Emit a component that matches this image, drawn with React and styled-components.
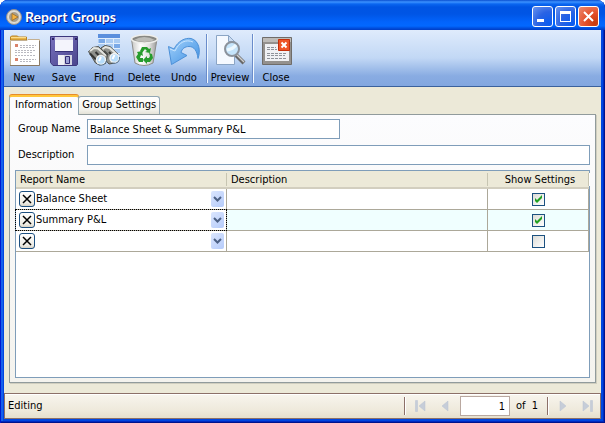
import { useState } from "react";
import styled, { createGlobalStyle, css } from "styled-components";

const GlobalStyle = createGlobalStyle`
  * {
    box-sizing: border-box;
  }
  body {
    margin: 0;
    background: #fff;
  }
  body, button, input, select {
    font-family: "DejaVu Sans Condensed", "DejaVu Sans", sans-serif;
    font-size: 11px;
    line-height: 14px;
    color: #000;
  }
`;

const Window = styled.div`
  display: flex;
  flex-direction: column;
  min-height: 100vh;
  padding: 0 4px 4px;
  border-radius: 8px 8px 0 0;
  background: #0046e0;
  box-shadow: inset 1px 0 #0019cf, inset -1px -1px #00138c, inset -2px -2px #0029c0, inset 3px 0 #1660ec;
`;

const TitleBar = styled.header`
  display: flex;
  align-items: center;
  gap: 3px;
  height: 30px;
  margin: 0 -4px;
  padding: 3px 6px 0;
  border-radius: 8px 8px 0 0;
  background: linear-gradient(
    #0a4fd0 0,
    #3c92ff 2px,
    #0a66f0 4px,
    #0054e3 7px,
    #0055e5 14px,
    #0264fc 22px,
    #0268ff 26px,
    #0050e0 28px,
    #003cc4 30px
  );
`;

const Title = styled.h1`
  flex: 1;
  margin: 0;
  font: bold 14px/18px Lato, "Open Sans", sans-serif;
  color: #fff;
  text-shadow: 1px 1px #0a1883;
`;

const CaptionButtons = styled.div`
  display: flex;
  gap: 2px;
`;

const CaptionButton = styled.button`
  display: grid;
  place-items: center;
  width: 21px;
  height: 21px;
  padding: 0;
  border: 1px solid #fff;
  border-radius: 3px;
  background: ${({ $close }) =>
    $close
      ? "radial-gradient(circle at 85% 85%, #c83a0c, #e4512c 45%, #eb8a70)"
      : "radial-gradient(circle at 85% 85%, #0a5cf0, #2a63e4 50%, #6a94ee)"};
`;

const Toolbar = styled.div`
  display: flex;
  height: 57px;
  padding-top: 4px;
  border-bottom: 1px solid #3b619c;
  background: linear-gradient(#dfebfc, #c2d8f5 50%, #89ace2 82%, #82a7e0);
`;

const ToolButton = styled.button`
  display: flex;
  flex-direction: column;
  align-items: center;
  gap: 5px;
  width: 40px;
  padding: 0;
  border: 0;
  background: none;
  white-space: nowrap;
`;

const ToolSeparator = styled.div`
  width: 2px;
  height: 49px;
  margin: 0 2px;
  border-left: 1px solid #6a8ccb;
  border-right: 1px solid #f1f9ff;
`;

const Body = styled.main`
  display: flex;
  flex: 1;
  flex-direction: column;
  padding: 8px 5px 10px;
  background: #ece9d8;
`;

const Tabs = styled.div`
  display: flex;
  align-items: flex-end;
`;

const Tab = styled.button`
  height: 18px;
  margin-left: -1px;
  padding: 0 3px 1px;
  border: 1px solid #91a7b4;
  border-bottom: 0;
  border-radius: 3px 3px 0 0;
  background: linear-gradient(#fff, #f5f4ee 70%, #e4e2d8);
  white-space: nowrap;

  ${({ $active }) =>
    $active &&
    css`
      height: 20px;
      margin: 0 0 -1px;
      padding: 0 6px 2px 5px;
      border-top: 2px solid #ffc73c;
      background: #fcfcfe;
      box-shadow: 0 -1px #e68b2c;
      z-index: 1;
    `}
`;

const Panel = styled.section`
  display: flex;
  flex: 1;
  flex-direction: column;
  padding: 4px 5px 4px;
  border: 1px solid #919b9c;
  background: linear-gradient(#fcfcfe, #f4f3ee);
  box-shadow: 1px 1px #d0cebf;
`;

const Fields = styled.div`
  display: grid;
  grid-template-columns: 72px 1fr;
  align-items: center;
  gap: 6px 0;
  padding-bottom: 5px;
`;

const FieldLabel = styled.label`
  padding-left: 3px;
`;

const TextInput = styled.input`
  width: 100%;
  max-width: ${({ $short }) => ($short ? "253px" : "none")};
  height: 20px;
  padding: 0 2px;
  border: 1px solid #7f9db9;
  background: #fff;
  outline: none;
`;

const GridFrame = styled.div`
  flex: 1;
  border: 1px solid #7f9db9;
  background: #fff;
`;

const Table = styled.table`
  width: 100%;
  border-collapse: separate;
  border-spacing: 0;
  table-layout: fixed;
`;

const HeadCell = styled.th`
  height: 18px;
  padding: 0;
  border-bottom: 2px solid #d2cebf;
  background: #ece9d8;
  font-weight: normal;
  text-align: ${({ $center }) => ($center ? "center" : "left")};
  line-height: 13px;
`;

const HeadText = styled.div`
  padding-left: 4px;
  border-right: 1px solid #c7c5b2;
  box-shadow: 1px 0 #fff;
`;

const Cell = styled.td`
  height: 21px;
  padding: 0;
  border-right: 1px solid #aca899;
  border-bottom: 1px solid #aca899;
  background: ${({ $current }) => ($current ? "#f0ffff" : "#fff")};
  text-align: center;
`;

const ReportCell = styled.div`
  display: grid;
  grid-template-columns: 16px 1fr;
  align-items: center;
  height: 20px;
  padding: 0 2px 0 3px;
  background: #fff;
  outline: ${({ $current }) => ($current ? "1px dotted #000" : "none")};
`;

const RemoveButton = styled.button`
  display: grid;
  place-items: center;
  width: 16px;
  height: 16px;
  padding: 0;
  border: 1px solid #1c4f80;
  border-radius: 3px;
  background: linear-gradient(#fff, #eeece4 80%, #d8d2c4);
`;

const Combo = styled.div`
  display: grid;
  align-items: center;
  min-width: 0;

  > * {
    grid-area: 1 / 1;
  }
`;

const ComboSelect = styled.select`
  appearance: none;
  width: 100%;
  height: 18px;
  padding: 0 14px 0 1px;
  border: 0;
  background: none;
  outline: none;
`;

const ComboArrow = styled.span`
  display: grid;
  place-items: center;
  justify-self: end;
  width: 13px;
  height: 16px;
  border-radius: 2px;
  background: linear-gradient(135deg, #dbe6fe, #b5cbfa);
  pointer-events: none;
`;

const CellInput = styled.input`
  display: block;
  width: 100%;
  height: 18px;
  padding: 0 4px;
  border: 0;
  background: none;
  outline: none;
`;

const Check = styled.input`
  appearance: none;
  display: block;
  width: 13px;
  height: 13px;
  margin: 0 auto;
  border: 1px solid #1c5180;
  background: linear-gradient(135deg, #dcdcd7, #fff);

  &:checked {
    background: url("data:image/svg+xml,%3Csvg xmlns='http://www.w3.org/2000/svg' viewBox='0 0 11 11'%3E%3Cpath d='M2 4v3l2 2 5-5V1L4 6z' fill='%2321a121'/%3E%3C/svg%3E"),
      linear-gradient(135deg, #dcdcd7, #fff);
  }
`;

const StatusBar = styled.footer`
  display: flex;
  align-items: center;
  height: 26px;
  border: 1px solid #8c7068;
  background: linear-gradient(#f8f5ee, #eee9db 70%, #e5dfcd);
  box-shadow: inset 0 1px #fff;
`;

const StatusText = styled.span`
  flex: 1;
  padding-left: 3px;
`;

const StatusSeparator = styled.div`
  width: 2px;
  height: 18px;
  margin: 0 1px;
  border-left: 1px solid #8c7068;
  border-right: 1px solid #fff;
`;

const PageButton = styled.button`
  display: grid;
  place-items: center;
  width: 25px;
  height: 20px;
  padding: 0;
  border: 0;
  background: none;
`;

const PageInput = styled.input`
  width: 50px;
  height: 20px;
  margin: 0 6px 0 3px;
  padding: 0 4px;
  border: 1px solid #b9a8a0;
  background: #fff;
  text-align: right;
  outline: none;
`;

const PageTotal = styled.span`
  width: 30px;
  white-space: pre;
`;

const AppIcon = () => (
  <svg width="16" height="16" viewBox="0 0 16 16">
    <circle cx="8" cy="8" r="7.5" fill="#d9d5cc" stroke="#8f8d90" />
    <circle cx="8" cy="8" r="5.5" fill="#a79d8c" stroke="#e6e2da" />
    <path d="M6 4.500 12 8 6 11.500z" fill="#f5b343" stroke="#8a5b14" strokeWidth=".6" />
  </svg>
);

const NewIcon = () => (
  <svg width="32" height="32" viewBox="0 0 32 32">
    <path d="M2.500 6V3l1-1h6l1 1h8v3z" fill="#e9b64a" stroke="#b98324" />
    <path d="M3 3.500h15" stroke="#fbdc8b" />
    <path d="M2.500 6.500H19L20 5.500h11.500v26h-29z" fill="#fff" stroke="#c4b090" />
    <path d="M2 31.500h29.500V7" fill="none" stroke="#8a7a66" />
    <path d="M7 10h3v3H7zM7 24h3v3H7z" fill="#d9826a" />
    <path
      d="M12 11.500h16M12 13.500h14M7 16.500h21M7 18.500h18M7 21.500h20M12 25.500h16M12 27.500h12"
      stroke="#b9b9c0"
      strokeDasharray="2 1"
    />
  </svg>
);

const SaveIcon = () => (
  <svg width="32" height="32" viewBox="0 0 32 32">
    <defs>
      <linearGradient id="disk" x2="1" y2="1">
        <stop stopColor="#7770bd" />
        <stop offset="1" stopColor="#4b458d" />
      </linearGradient>
    </defs>
    <path d="M2.500 2.500h27v28l-1 1H5l-2.500-3z" fill="url(#disk)" stroke="#3d377c" />
    <path d="M7 3h18v14H7z" fill="#f4f4fc" />
    <path d="M7 3h18v3H7z" fill="#d3d1ea" />
    <path d="M7 17.500h18" stroke="#363078" />
    <path d="M10 21h14v10H10z" fill="#d5d5e2" />
    <path d="M10 21h6v10h-6z" fill="#f0f0f6" />
    <path d="M17.500 22.500h4v7h-4z" fill="#9da0d4" stroke="#302a74" />
    <path d="M4 4h2v2H4zM27 4h2v2h-2z" fill="#282260" />
  </svg>
);

const FindIcon = () => (
  <svg width="34" height="32" viewBox="0 0 34 32">
    <path d="M11 0h22v26H11z" fill="#a9cbf3" />
    <path d="M11 0h22v4H11z" fill="#5b8fdd" />
    <path d="M11 4.500h22M11 9.500h22M11 14.500h22M11 19.500h22M18.500 4v20M26.500 4v20" stroke="#e0edfc" />
    <path d="M12 5h6v4h-6zM27 10h6v4h-6z" fill="#7aa9e7" />
    <path d="m14 14 4-2.500 5 1 8 7.500-3 9-6 1-8-9z" fill="#8f918c" stroke="#4e504c" />
    <path d="m1.500 17.500 4-4 6-1 9 9-2 8-6 1.500-4-2z" fill="#8f918c" stroke="#4e504c" />
    <path d="m3 17 4-3 4 .5 8 7" fill="none" stroke="#e4e5e0" strokeWidth="2" />
    <path d="m15.500 15 3-2 4 1 7 6" fill="none" stroke="#e4e5e0" strokeWidth="2" />
    <path d="m3 19.500 6 6M8.500 18l3 3M22 18l2 2" stroke="#343533" strokeWidth="2" />
    <path d="m17 17 4 4" stroke="#4a4c49" strokeWidth="2" />
    <circle cx="14" cy="26" r="4.500" fill="#b7ddfb" stroke="#f0f2f2" strokeWidth="1.500" />
    <circle cx="27.500" cy="24" r="4.500" fill="#b7ddfb" stroke="#f0f2f2" strokeWidth="1.500" />
    <path d="M11 30.500q3 1.500 6 0 2-2 2.500-4M25 29q4 1 6-1 2-2 1.500-5" fill="none" stroke="#55718c" />
    <path d="m12 27 2-4M25.500 25l2-4" stroke="#fff" strokeWidth="2" />
  </svg>
);

const DeleteIcon = () => (
  <svg width="32" height="32" viewBox="0 0 32 32">
    <defs>
      <linearGradient id="bin">
        <stop stopColor="#c6c6c3" />
        <stop offset=".35" stopColor="#fff" />
        <stop offset=".7" stopColor="#e0e0de" />
        <stop offset="1" stopColor="#9a9a98" />
      </linearGradient>
    </defs>
    <path d="M3.500 5 7 29q9 5 18 0l4-24z" fill="url(#bin)" stroke="#8c8c89" />
    <ellipse cx="16.500" cy="5" rx="13" ry="4" fill="#878782" stroke="#eeeeeb" strokeWidth="1.500" />
    <path d="M6 6q10-6 21 0-10 4-21 0" fill="#bcbcb7" />
    <g fill="#279c2d">
      <path d="m12 17 2-4h5l2 2 2-1-1 5-5-1 2-1-2-2-3 4z" />
      <path d="m9 18 5-1 1 5-2-1-1 3h3v4h-4l-3-5 2-3z" />
      <path d="m21 19 3 1 1 4-3 4h-3v2l-4-4 4-4v2h2l1-2z" />
    </g>
  </svg>
);

const UndoIcon = () => (
  <svg width="34" height="32" viewBox="0 0 34 32">
    <defs>
      <linearGradient id="undo" x2="1" y2="1">
        <stop stopColor="#a7d4fc" />
        <stop offset="1" stopColor="#3d8fe2" />
      </linearGradient>
    </defs>
    <path
      d="M1.500 12.500 7 15C11 7 18 3.500 24 4.500c8 2 10 12 7 20-1-8-4-12-9-12-4 0-7 2-8 6l6 3L4.500 30.500z"
      fill="url(#undo)"
      stroke="#4c90d8"
      strokeLinejoin="round"
    />
    <path d="M3 15l5 2C12 8 19 5 26 8" fill="none" stroke="#c9e5ff" />
  </svg>
);

const PreviewIcon = () => (
  <svg width="32" height="32" viewBox="0 0 32 32">
    <path d="M2.500 1.500h12l6 6v23h-18z" fill="#f5f9ff" stroke="#8ba5c5" />
    <path d="M14.500 1.500v6h6z" fill="#cbdcf2" stroke="#8ba5c5" />
    <path d="m22 21 8 8" stroke="#686868" strokeWidth="4" />
    <path d="m22 20 8 8" stroke="#d0d0d0" strokeWidth="1.500" />
    <circle cx="18" cy="15" r="7" fill="#c5e4fb" stroke="#8b929c" strokeWidth="2" />
    <path d="M13 16q6-1 9-5" fill="none" stroke="#edf8ff" strokeWidth="3" />
  </svg>
);

const CloseIcon = () => (
  <svg width="32" height="32" viewBox="0 0 32 32">
    <path d="M2.500 3.500h29v27h-29z" fill="#94918e" stroke="#6f6c69" />
    <path d="M3 4h28v4H3z" fill="#bdbbb8" />
    <path d="M5 10h24v17H5z" fill="#f0f1f4" />
    <path
      d="M7 13.500h9M7 15.500h10M7 19.500h19M7 21.500h18M7 24.500h19"
      stroke="#8e9299"
      strokeDasharray="3 1"
    />
    <path d="M18.500 5.500h11v11h-11z" fill="#ef5426" stroke="#c52f0b" />
    <path d="m21.500 8.500 5 5m0-5-5 5" stroke="#fff" strokeWidth="2" />
  </svg>
);

const PageIcon = ({ flip, bar }) => (
  <svg width="12" height="12" viewBox="0 0 12 12">
    <g transform={flip ? "matrix(-1 0 0 1 12 0)" : undefined}>
      <path d={bar ? "M1 1 7 6 1 11z" : "M3 1 9 6 3 11z"} fill="#c6cdd8" stroke="#b8c2d2" strokeWidth=".5" />
      {bar && <path d="M8.500 .500h2v11h-2z" fill="#c6cdd8" stroke="#b8c2d2" strokeWidth=".5" />}
    </g>
  </svg>
);

const tools = [
  { label: "New", Icon: NewIcon },
  { label: "Save", Icon: SaveIcon },
  { label: "Find", Icon: FindIcon },
  { label: "Delete", Icon: DeleteIcon },
  { label: "Undo", Icon: UndoIcon },
  null,
  { label: "Preview", Icon: PreviewIcon },
  null,
  { label: "Close", Icon: CloseIcon },
];

const reports = ["", "Balance Sheet", "Summary P&L"];

const initialRows = [
  { id: 1, report: "Balance Sheet", show: true },
  { id: 2, report: "Summary P&L", show: true },
  { id: 3, report: "", show: false },
];

const ReportRow = ({ row, current, onSelect }) => (
  <tr onClick={onSelect}>
    <Cell $current={current}>
      <ReportCell $current={current}>
        <RemoveButton aria-label="Remove report">
          <svg width="10" height="10" viewBox="0 0 10 10">
            <path d="m1 1 8 8m0-8-8 8" stroke="#000" strokeWidth="1.500" />
          </svg>
        </RemoveButton>
        <Combo>
          <ComboSelect aria-label="Report name" defaultValue={row.report}>
            {reports.map((name) => (
              <option key={name}>{name}</option>
            ))}
          </ComboSelect>
          <ComboArrow>
            <svg width="9" height="7" viewBox="0 0 9 7">
              <path d="m1 1 3.500 3.500L8 1" fill="none" stroke="#4d6185" strokeWidth="2" />
            </svg>
          </ComboArrow>
        </Combo>
      </ReportCell>
    </Cell>
    <Cell $current={current}>
      <CellInput aria-label="Report description" />
    </Cell>
    <Cell $current={current}>
      <Check type="checkbox" aria-label="Show settings" defaultChecked={row.show} />
    </Cell>
  </tr>
);

export default function App() {
  const [current, setCurrent] = useState(2);

  return (
    <>
      <GlobalStyle />
      <Window>
        <TitleBar>
          <AppIcon />
          <Title>Report Groups</Title>
          <CaptionButtons>
            <CaptionButton aria-label="Minimize">
              <svg width="15" height="15" viewBox="0 0 15 15">
                <path d="M2 10h7v3H2z" fill="#fff" />
              </svg>
            </CaptionButton>
            <CaptionButton aria-label="Maximize">
              <svg width="15" height="15" viewBox="0 0 15 15">
                <path d="M2 2h11v11H2zM3 5v7h9V5z" fill="#fff" fillRule="evenodd" />
              </svg>
            </CaptionButton>
            <CaptionButton $close aria-label="Close window">
              <svg width="15" height="15" viewBox="0 0 15 15">
                <path d="m3 3 9 9m0-9-9 9" stroke="#fff" strokeWidth="2" />
              </svg>
            </CaptionButton>
          </CaptionButtons>
        </TitleBar>

        <Toolbar>
          {tools.map((tool, i) =>
            tool ? (
              <ToolButton key={tool.label}>
                <tool.Icon />
                {tool.label}
              </ToolButton>
            ) : (
              <ToolSeparator key={i} />
            )
          )}
        </Toolbar>

        <Body>
          <Tabs role="tablist">
            <Tab role="tab" aria-selected="true" $active>
              Information
            </Tab>
            <Tab role="tab" aria-selected="false">
              Group Settings
            </Tab>
          </Tabs>
          <Panel role="tabpanel">
            <Fields>
              <FieldLabel htmlFor="group-name">Group Name</FieldLabel>
              <TextInput id="group-name" $short defaultValue="Balance Sheet & Summary P&L" />
              <FieldLabel htmlFor="description">Description</FieldLabel>
              <TextInput id="description" />
            </Fields>
            <GridFrame>
              <Table>
                <colgroup>
                  <col style={{ width: 211 }} />
                  <col />
                  <col style={{ width: 101 }} />
                </colgroup>
                <thead>
                  <tr>
                    <HeadCell>
                      <HeadText>Report Name</HeadText>
                    </HeadCell>
                    <HeadCell>
                      <HeadText>Description</HeadText>
                    </HeadCell>
                    <HeadCell $center>
                      <HeadText>Show Settings</HeadText>
                    </HeadCell>
                  </tr>
                </thead>
                <tbody>
                  {initialRows.map((row) => (
                    <ReportRow
                      key={row.id}
                      row={row}
                      current={row.id === current}
                      onSelect={() => setCurrent(row.id)}
                    />
                  ))}
                </tbody>
              </Table>
            </GridFrame>
          </Panel>
        </Body>

        <StatusBar>
          <StatusText>Editing</StatusText>
          <StatusSeparator />
          <PageButton aria-label="First record" disabled>
            <PageIcon flip bar />
          </PageButton>
          <PageButton aria-label="Previous record" disabled>
            <PageIcon flip />
          </PageButton>
          <PageInput aria-label="Current record" defaultValue="1" />
          <PageTotal>of  1</PageTotal>
          <StatusSeparator />
          <PageButton aria-label="Next record" disabled>
            <PageIcon />
          </PageButton>
          <PageButton aria-label="Last record" disabled>
            <PageIcon bar />
          </PageButton>
        </StatusBar>
      </Window>
    </>
  );
}
